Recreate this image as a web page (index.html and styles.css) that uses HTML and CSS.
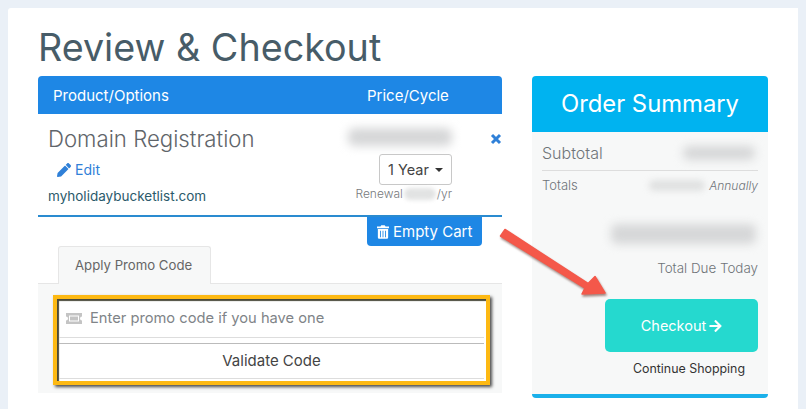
FILE: index.html
```html
<!DOCTYPE html>
<html lang="en">
<head>
    <meta charset="UTF-8">
    <title>Review &amp; Checkout</title>
    <link rel="stylesheet" href="styles.css">
</head>
<body>
    <div class="card">
        <h1>Review &amp; Checkout</h1>
        <div class="checkout">
            <div class="cart">
                <div class="cart-head">
                    <span class="head-product">Product/Options</span>
                    <span class="head-price">Price/Cycle</span>
                </div>
                <div class="cart-item">
                    <div class="item-info">
                        <div class="item-name">Domain Registration</div>
                        <a class="item-edit">
                            <svg class="icon-edit" viewBox="0 0 512 512"><path d="M497.9 142.1l-46.1 46.1c-4.7 4.7-12.3 4.7-17 0l-111-111c-4.7-4.7-4.7-12.3 0-17l46.1-46.1c18.7-18.7 49.1-18.7 67.9 0l60.1 60.1c18.8 18.7 18.8 49.1 0 67.9zM284.2 99.8L21.6 362.4.4 483.9c-2.9 16.4 11.4 30.6 27.8 27.8l121.5-21.3 262.6-262.6c4.7-4.7 4.7-12.3 0-17l-111-111c-4.8-4.7-12.4-4.7-17.1 0z"/></svg>
                            Edit
                        </a>
                        <div class="item-domain">myholidaybucketlist.com</div>
                    </div>
                    <div class="item-price">
                        <div class="blur blur-price"></div>
                        <div class="cycle-select">1 Year <span class="caret"></span></div>
                        <div class="renewal">Renewal<span class="blur blur-renewal"></span>/yr</div>
                    </div>
                    <svg class="icon-remove" viewBox="0 0 12 12"><path d="M2 2l8 8M10 2l-8 8"/></svg>
                </div>
                <div class="cart-actions">
                    <button class="btn-empty">
                        <svg class="icon-trash" viewBox="0 0 14 16"><path d="M5 0h4l1 1.5h4v2H0v-2h4zM1 4.500h12V14.500a1.500 1.500 0 0 1-1.500 1.500h-9A1.500 1.500 0 0 1 1 14.500zM3.500 6.500v7.500h1V6.500zM6.500 6.500v7.500h1V6.500zM9.500 6.500v7.500h1V6.500z" fill-rule="evenodd"/></svg>
                        Empty Cart
                    </button>
                </div>
                <div class="tabs">
                    <div class="tab">Apply Promo Code</div>
                </div>
                <div class="tab-pane">
                    <div class="promo">
                        <div class="promo-input">
                            <svg class="icon-ticket" viewBox="0 0 16 11"><path d="M0 0h16v3.500a2 2 0 0 0 0 4V11H0V7.500a2 2 0 0 0 0-4zM3 2.500v6h10v-6z" fill-rule="evenodd"/><path d="M4 3.500h8v4H4z"/></svg>
                            Enter promo code if you have one
                        </div>
                        <div class="promo-btn">Validate Code</div>
                    </div>
                </div>
            </div>
            <div class="summary">
                <div class="summary-head">Order Summary</div>
                <div class="summary-body">
                    <div class="sub-row">
                        <span>Subtotal</span>
                        <span class="blur blur-sub"></span>
                    </div>
                    <div class="total-row">
                        <span>Totals</span>
                        <span class="total-cycle"><span class="blur blur-total"></span><em>Annually</em></span>
                    </div>
                    <div class="blur blur-due"></div>
                    <div class="due-label">Total Due Today</div>
                    <div class="btn-checkout">
                        Checkout
                        <svg class="icon-arrow" viewBox="0 0 448 512"><path d="M190.5 66.9l22.2-22.2c9.4-9.4 24.6-9.400 33.900 0L441 239c9.400 9.400 9.400 24.600 0 33.900L246.600 467.300c-9.400 9.400-24.600 9.400-33.900 0l-22.200-22.200c-9.500-9.500-9.300-25 .4-34.300L311.400 296H24c-13.300 0-24-10.700-24-24v-32c0-13.300 10.700-24 24-24h287.400L190.900 101.200c-9.800-9.300-10-24.800-.4-34.300z"/></svg>
                    </div>
                    <div class="continue">Continue Shopping</div>
                </div>
            </div>
        </div>
        <!-- annotation arrow on top of the screenshot -->
        <svg class="arrow" viewBox="0 0 120 80" width="120" height="80">
            <path d="M3.500 13L8 6.500L91 60.500L98 53.500L108 70L85 71L88 65z" class="arrow-tip"/>
        </svg>
    </div>
</body>
</html>
```

FILE: styles.css
```css
:root {
    --page-bg: #eaf0f7;
    --blue: #1e87e5;
    --sky: #00b3f0;
    --teal: #25d9cf;
    --muted: #6f7478;
    --panel: #f7f8f8;
}

body {
    margin: 0;
    padding: 8px;
    background-color: var(--page-bg);
    font-family: Inter, "Open Sans", sans-serif;
    height: 393px;
    overflow: hidden;
}

.card {
    position: relative;
    width: 760px;
    height: 401px;
    padding: 0 0 0 30px;
    background-color: #fff;
    border-radius: 3px 0 0 0;
}

h1 {
    margin: 0;
    height: 68px;
    padding-top: 16px;
    box-sizing: border-box;
    font-size: 37.7px;
    line-height: 46px;
    font-weight: 400;
    color: #475c68;
}

.checkout {
    display: flex;
    gap: 30px;
    align-items: flex-start;
}

.cart {
    width: 464px;
}

.cart-head {
    display: flex;
    align-items: center;
    height: 38px;
    background-color: var(--blue);
    border-radius: 4px 4px 0 0;
    color: #fff;
    font-size: 15px;
}

.head-product {
    margin-left: 15px;
    width: 314px;
}

.cart-item {
    position: relative;
    display: flex;
    justify-content: space-between;
    height: 101px;
    border-bottom: 2px solid #2a8bd0;
}

.item-info {
    padding: 12px 0 0 10px;
}

.item-name {
    font-size: 22.2px;
    line-height: 26px;
    font-weight: 300;
    color: #5f656a;
}

.item-edit {
    display: flex;
    align-items: center;
    gap: 4px;
    margin: 5px 0 0 9px;
    font-size: 14px;
    line-height: 26px;
    color: #2f80d8;
}

.icon-edit {
    width: 14px;
    height: 14px;
    fill: #2f80d8;
}

.item-domain {
    margin-top: 0;
    font-size: 13.5px;
    line-height: 26px;
    color: #2b5a6b;
}

.item-price {
    display: flex;
    flex-direction: column;
    align-items: flex-end;
    width: 150px;
    margin-right: 50px;
}

.blur {
    display: inline-block;
    background-color: #d6d7d8;
    filter: blur(5px);
    border-radius: 6px;
}

.blur-price {
    width: 104px;
    height: 18px;
    margin: 14px 0 0 0;
}

.cycle-select {
    display: flex;
    align-items: center;
    justify-content: center;
    gap: 6px;
    box-sizing: border-box;
    width: 73px;
    height: 31px;
    margin-top: 8px;
    border: 1px solid #c8c8c8;
    border-radius: 3px;
    font-size: 14.5px;
    color: #444;
}

.caret {
    border-top: 4px solid #333;
    border-left: 4px solid transparent;
    border-right: 4px solid transparent;
}

.renewal {
    display: flex;
    align-items: center;
    margin-top: 1px;
    font-size: 12px;
    line-height: 16px;
    font-weight: 300;
    color: #777a7d;
}

.blur-renewal {
    width: 32px;
    height: 12px;
    margin: 0 1px;
    background-color: #e2e3e3;
    filter: blur(2px);
}

.icon-remove {
    position: absolute;
    right: 0;
    top: 19px;
    width: 12px;
    height: 12px;
    fill: none;
    stroke: #2f80d8;
    stroke-width: 3;
}

.cart-actions {
    display: flex;
    justify-content: flex-end;
    padding-right: 20px;
}

.btn-empty {
    display: flex;
    align-items: center;
    gap: 4px;
    width: 115px;
    height: 29px;
    padding: 0 0 0 10px;
    border: none;
    border-radius: 0 0 4px 4px;
    background-color: var(--blue);
    color: #fff;
    font-family: inherit;
    font-size: 15px;
}

.icon-trash {
    width: 12px;
    height: 14px;
    fill: #fff;
}

.tabs {
    display: flex;
    padding-left: 20px;
    height: 37px;
}

.tab {
    box-sizing: border-box;
    width: 153px;
    height: 38px;
    padding-left: 16px;
    border: 1px solid #e6e6e6;
    border-bottom: none;
    border-radius: 3px 3px 0 0;
    background-color: var(--panel);
    font-size: 13.2px;
    line-height: 36px;
    color: #666;
}

.tab-pane {
    box-sizing: border-box;
    height: 110px;
    padding: 11px 12px 0 15px;
    border-top: 1px solid #e6e6e6;
    background-color: var(--panel);
}

.promo {
    box-sizing: border-box;
    height: 90px;
    border: 4px solid #fdb913;
    outline: 1px solid #fdb913;
    outline-offset: -1px;
    box-shadow: inset 2px 2px 1px #4a4a3a, 2px 2px 3px rgba(0, 0, 0, 0.7);
    padding: 3px 2px 2px 2px;
    background-color: #fff;
}

.promo-input {
    display: flex;
    align-items: center;
    gap: 8px;
    height: 32px;
    padding: 0 0 3px 7px;
    border-bottom: 1px solid #ddd;
    font-size: 14.7px;
    color: #808488;
}

.icon-ticket {
    width: 16px;
    height: 11px;
    fill: #c4c4c4;
}

.promo-btn {
    height: 34px;
    margin-top: 5px;
    border-top: 1px solid #bbb;
    border-bottom: 1px solid #ddd;
    text-align: center;
    font-size: 15px;
    line-height: 34px;
    color: #444;
}

.summary {
    width: 236px;
    border-bottom: 4px solid #1ab0ea;
    border-radius: 4px;
    background-color: var(--panel);
}

.summary-head {
    height: 56px;
    background-color: var(--sky);
    border-radius: 4px 4px 0 0;
    text-align: center;
    font-size: 23.8px;
    line-height: 56px;
    color: #fff;
}

.summary-body {
    display: flex;
    flex-direction: column;
    box-sizing: border-box;
    height: 262px;
    padding: 0 10px;
    color: var(--muted);
    font-weight: 300;
}

.sub-row {
    display: flex;
    justify-content: space-between;
    align-items: center;
    box-sizing: border-box;
    height: 39px;
    padding-top: 4px;
    border-bottom: 1px solid #ddd;
    font-size: 16px;
}

.blur-sub {
    width: 72px;
    height: 14px;
    margin-right: 3px;
}

.total-row {
    display: flex;
    justify-content: space-between;
    align-items: center;
    height: 28px;
    font-size: 13px;
}

.total-cycle {
    display: flex;
    align-items: center;
    font-size: 12px;
}

.blur-total {
    width: 56px;
    height: 11px;
    margin-right: 4px;
    background-color: #e0e1e1;
    filter: blur(3px);
}

.blur-due {
    align-self: flex-end;
    width: 145px;
    height: 20px;
    margin: 25px 2px 0 0;
}

.due-label {
    margin-top: 14px;
    text-align: right;
    font-size: 13.4px;
    line-height: 20px;
}

.btn-checkout {
    display: flex;
    align-items: center;
    justify-content: center;
    gap: 3px;
    align-self: flex-end;
    width: 153px;
    height: 53px;
    margin-top: 21px;
    border-radius: 5px;
    background-color: var(--teal);
    color: #fff;
    font-size: 14.5px;
    font-weight: 400;
}

.icon-arrow {
    width: 13px;
    height: 14px;
    fill: #fff;
}

.continue {
    margin: 9px 13px 0 0;
    text-align: right;
    font-size: 12.4px;
    line-height: 16px;
    font-weight: 400;
    color: #333;
}

.arrow {
    position: absolute;
    left: 489px;
    top: 215px;
    filter: drop-shadow(1px 2px 1px rgba(90, 40, 30, 0.55));
}

.arrow-tip {
    fill: #f4584a;
    stroke: #f4584a;
    stroke-width: 1.5;
    stroke-linejoin: round;
}
```
